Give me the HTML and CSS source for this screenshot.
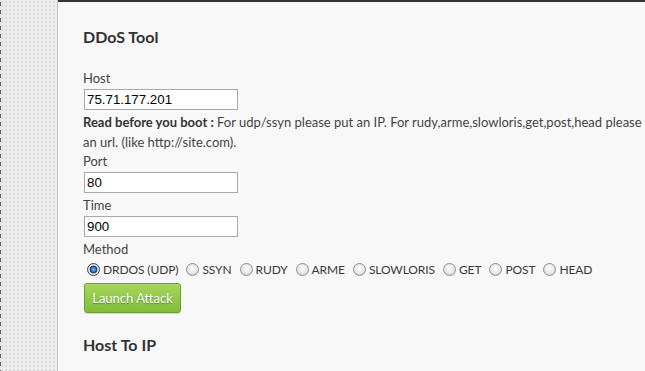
FILE: index.html
```html
<!DOCTYPE html>
<html>
<head>
<meta charset="utf-8">
<link rel="stylesheet" href="styles.css">
</head>
<body>
<div class="page">
  <div class="side"></div>
  <div class="main">
    <h2 class="title">DDoS Tool</h2>
    <form class="form">
      <label class="lbl">Host</label>
      <input class="field" type="text" value="75.71.177.201">
      <p class="note"><b>Read before you boot :</b> For udp/ssyn please put an IP. For rudy,arme,slowloris,get,post,head please put an url. (like http://site.com).</p>
      <label class="lbl lbl-tight">Port</label>
      <input class="field" type="text" value="80">
      <label class="lbl">Time</label>
      <input class="field" type="text" value="900">
      <label class="lbl">Method</label>
      <div class="methods">
        <label class="opt"><input type="radio" name="m" checked><span>DRDOS (UDP)</span></label>
        <label class="opt"><input type="radio" name="m"><span>SSYN</span></label>
        <label class="opt"><input type="radio" name="m"><span>RUDY</span></label>
        <label class="opt"><input type="radio" name="m"><span>ARME</span></label>
        <label class="opt"><input type="radio" name="m"><span>SLOWLORIS</span></label>
        <label class="opt"><input type="radio" name="m"><span>GET</span></label>
        <label class="opt"><input type="radio" name="m"><span>POST</span></label>
        <label class="opt"><input type="radio" name="m"><span>HEAD</span></label>
      </div>
      <button class="btn" type="button">Launch Attack</button>
    </form>
    <h2 class="title title2">Host To IP</h2>
  </div>
</div>
</body>
</html>
```
FILE: styles.css
```css
html, body {
  margin: 0;
  padding: 0;
  height: 100%;
  overflow: hidden;
}
body {
  font-family: "Lato", "Open Sans", sans-serif;
  font-size: 13px;
  color: #3a3a3a;
  background: #f7f7f7;
}
.page {
  display: flex;
  height: 371px;
}
.side {
  width: 57px;
  flex: none;
  background-color: #ededed;
  background-image:
    repeating-linear-gradient(to bottom, #606060 0 4px, transparent 4px 8px),
    radial-gradient(circle, #d9d9d9 0.8px, transparent 1px);
  background-size: 1px 8px, 4px 4px;
  background-repeat: repeat-y, repeat;
  background-position: 0 2px, 0 0;
  border-right: 1px solid #c4c4c4;
}
.main {
  flex: 1;
  background: #f8f8f8;
  border-top: 2px solid #333;
  padding-left: 25px;
  white-space: nowrap;
  overflow: hidden;
}
.title {
  font-size: 16px;
  font-weight: bold;
  color: #333;
  margin: 25px 0 0 0;
  line-height: 20px;
}
.form {
  margin-top: 21px;
  display: flex;
  flex-direction: column;
  align-items: flex-start;
}
.lbl {
  line-height: 20px;
  height: 20px;
  color: #444;
}
.lbl-tight {
  height: 19px;
  line-height: 19px;
}
.field {
  width: 154px;
  height: 21px;
  box-sizing: border-box;
  margin: 1px 0 2px 1px;
  border: 1px solid #a9a9a9;
  background: #fff;
  font-family: "Liberation Sans", Arial, sans-serif;
  font-size: 13.3px;
  color: #000;
  padding: 0 2px;
}
.note {
  margin: 0;
  line-height: 20px;
  white-space: normal;
  width: 585px;
  color: #444;
}
.note b {
  color: #333;
}
.methods {
  display: flex;
  gap: 8px;
  margin: 1px 0 0 4px;
  height: 19px;
  align-items: center;
  font-size: 12px;
  letter-spacing: -0.1px;
}
.opt {
  display: flex;
  align-items: center;
  gap: 3px;
}
.opt input {
  appearance: none;
  -webkit-appearance: none;
  margin: 0;
  width: 13px;
  height: 13px;
  border-radius: 50%;
  border: 1px solid #8f8f8f;
  background: radial-gradient(circle at 50% 40%, #fdfdfd 0, #e6e6e6 55%, #c4c4c4 100%);
  box-sizing: border-box;
}
.opt input:checked {
  border-color: #3b4a5a;
  background: radial-gradient(circle, #8cc8f2 0, #2b7fc4 2px, #1c3a5c 3.5px, #d8d8d8 4.2px, #f0f0f0 100%);
}
.btn {
  margin: 4px 0 0 1px;
  width: 97px;
  height: 30px;
  border: 1px solid #6d9e2e;
  border-radius: 3px;
  background: linear-gradient(to bottom, #a6d65a, #82bd3c);
  color: #fff;
  font-family: "Lato", "Open Sans", sans-serif;
  font-size: 13px;
  text-shadow: 0 1px 1px rgba(60, 100, 20, 0.6);
  box-shadow: 0 1px 1px rgba(0,0,0,0.15);
  padding: 0;
}
.title2 {
  margin-top: 22px;
}
```
